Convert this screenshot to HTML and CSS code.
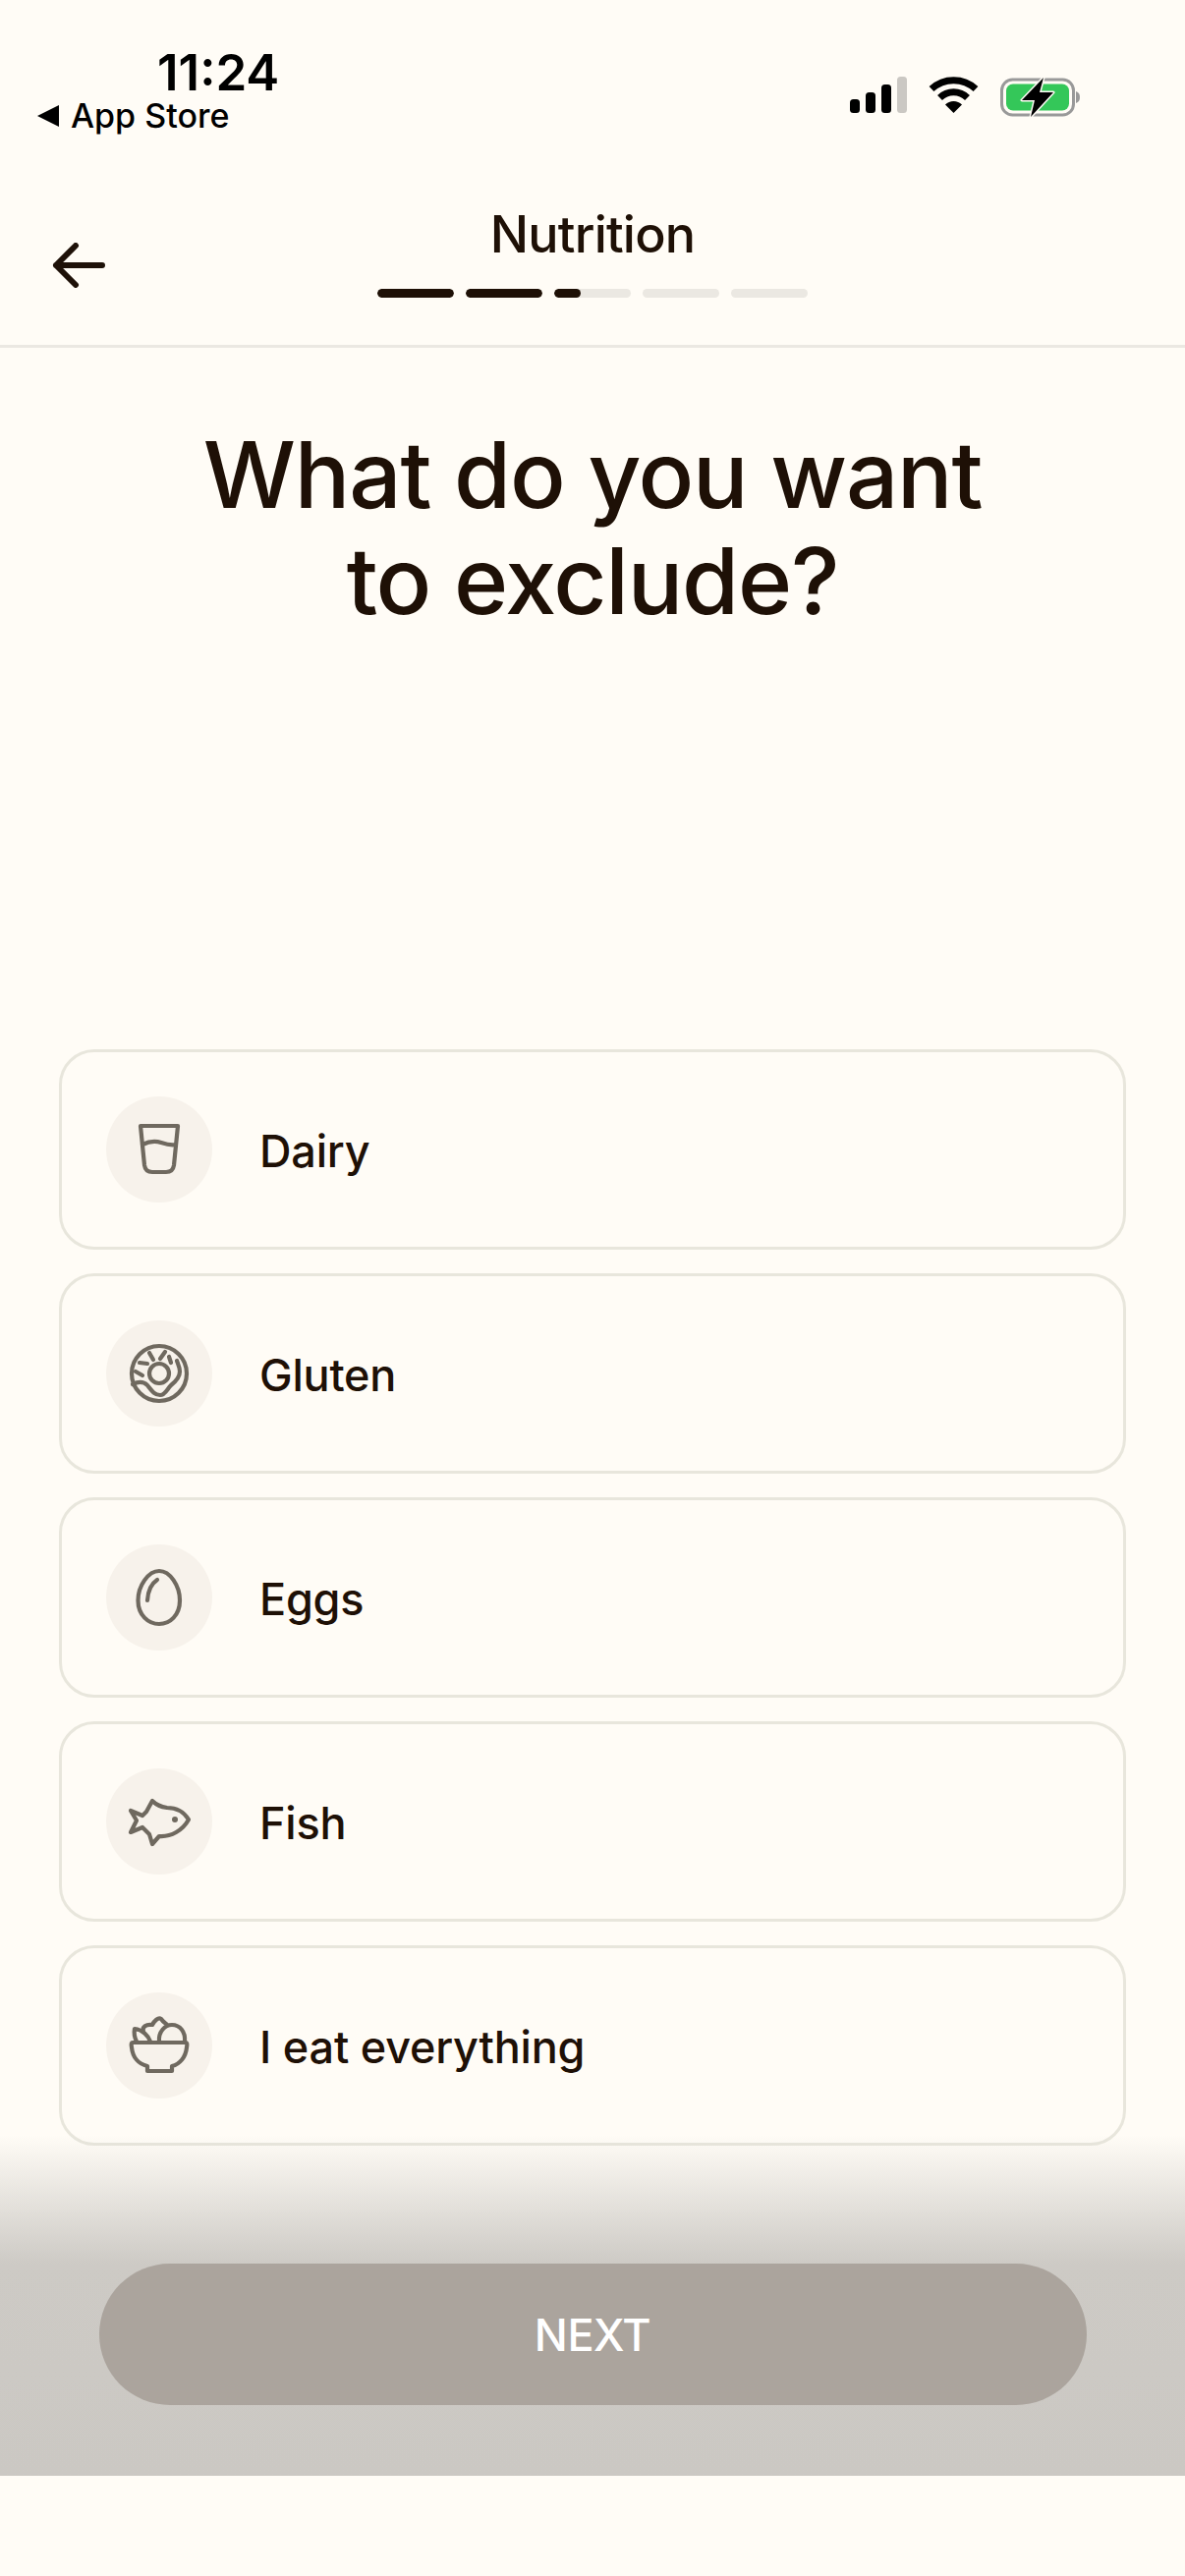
FILE: index.html
```html
<!DOCTYPE html>
<html lang="en">
<head>
  <meta charset="UTF-8">
  <title>Nutrition</title>
  <link rel="stylesheet" href="styles.css">
</head>
<body>
  <div class="status-bar">
    <div class="status-left">
      <div class="time">11:24</div>
      <div class="back-app"><span class="back-tri"></span>App Store</div>
    </div>
    <div class="status-right">
      <svg class="signal" width="58" height="37" viewBox="0 0 58 37">
        <rect x="0" y="23" width="10" height="14" rx="3.5" fill="#000"/>
        <rect x="16" y="16" width="10" height="21" rx="3.5" fill="#000"/>
        <rect x="32" y="8" width="10" height="29" rx="3.5" fill="#000"/>
        <rect x="48" y="0" width="10" height="37" rx="3.5" fill="#cbc8c3"/>
      </svg>
      <svg class="wifi" width="51" height="37" viewBox="0 0 51 37">
        <path d="M3 12.500A33 33 0 0 1 48 12.500" fill="none" stroke="#000" stroke-width="7"/>
        <path d="M11.500 21.500A20 20 0 0 1 39.500 21.500" fill="none" stroke="#000" stroke-width="7"/>
        <path d="M25.500 37L17 28.500A12 12 0 0 1 34 28.500Z" fill="#000"/>
      </svg>
      <svg class="battery" width="82" height="42" viewBox="0 0 82 42">
        <rect x="1.500" y="3" width="73" height="36" rx="11" fill="none" stroke="#999" stroke-width="3"/>
        <rect x="6" y="7.500" width="64" height="27" rx="7" fill="#34c759"/>
        <path d="M77 15C80 16 81 18 81 21C81 24 80 26 77 27Z" fill="#999"/>
        <path d="M44 1L22 24H35L31 41L54 16H40Z" fill="#000" stroke="#fffcf6" stroke-width="3" paint-order="stroke" stroke-linejoin="round"/>
      </svg>
    </div>
  </div>

  <header class="top-nav">
    <svg class="back-arrow" width="56" height="46" viewBox="0 0 56 46">
      <path d="M52 23H5M25 3L5 23L25 43" fill="none" stroke="#1e1108" stroke-width="6" stroke-linecap="round" stroke-linejoin="round"/>
    </svg>
    <div class="nav-center">
      <div class="nav-title">Nutrition</div>
      <div class="progress">
        <div class="seg"><div class="seg-fill seg-full"></div></div>
        <div class="seg"><div class="seg-fill seg-full"></div></div>
        <div class="seg"><div class="seg-fill seg-third"></div></div>
        <div class="seg"></div>
        <div class="seg"></div>
      </div>
    </div>
  </header>

  <h1 class="question">What do you want<br>to exclude?</h1>

  <div class="options">
    <div class="option">
      <div class="option-icon">
        <svg viewBox="0 0 108 108" width="108" height="108">
          <path d="M35 30H73L69 70Q68 77 61 77H47Q40 77 39 70Z"/>
          <path d="M37 49C45 45 50 45 56 47C62 49 66 50 71 49"/>
        </svg>
      </div>
      <span class="option-label">Dairy</span>
    </div>
    <div class="option">
      <div class="option-icon">
        <svg viewBox="0 0 108 108" width="108" height="108">
          <circle cx="54" cy="54" r="28"/>
          <circle cx="54" cy="54" r="10"/>
          <path d="M34 43L42 44M44 33L48 40M60 32L55 39M64 37L66 43M30 52L37 56"/>
          <path d="M27 65C33 62 38 62 42 66C46 71 49 76 55 76C60 76 62 70 66 66C71 62 75 58 75 52C75 48 73 44 72 41"/>
        </svg>
      </div>
      <span class="option-label">Gluten</span>
    </div>
    <div class="option">
      <div class="option-icon">
        <svg viewBox="0 0 108 108" width="108" height="108">
          <path d="M54 27C65 27 75 42 75 57C75 72 65 81 54 81C43 81 32.500 72 32.500 57C32.500 42 43 27 54 27Z"/>
          <path d="M52 36C46 40 42.500 48 42 57"/>
        </svg>
      </div>
      <span class="option-label">Eggs</span>
    </div>
    <div class="option">
      <div class="option-icon">
        <svg viewBox="0 0 108 108" width="108" height="108">
          <path d="M84 52C79 44 72 40 62 40C56 39 52 38 47 33L41 44L37 48L25 43L31 53L25 65L37 60L44 67L47 77L54 69C66 70 78 63 84 52Z"/>
          <circle class="dot" cx="70" cy="52" r="3"/>
        </svg>
      </div>
      <span class="option-label">Fish</span>
    </div>
    <div class="option">
      <div class="option-icon">
        <svg viewBox="0 0 108 108" width="108" height="108">
          <path d="M27 51H81Q83 51 82 56C81 66 75 73 67 75V80H42V75C33 73 27 66 26 56Q25 51 27 51Z"/>
          <path d="M54 50C53 40 60 33 67 33C75 33 81 40 80 50"/>
          <path d="M45 50C43 44 37 38 29 37C28 42 29 46 31 50"/>
          <path d="M38 40C36 35 41 32 47 33C49 29 53 25 56 27C58 30 60 31 62 33"/>
        </svg>
      </div>
      <span class="option-label">I eat everything</span>
    </div>
  </div>

  <div class="footer">
    <button class="next-btn" type="button">NEXT</button>
  </div>
</body>
</html>
```

FILE: styles.css
```css
html, body {
  margin: 0;
  padding: 0;
}

body {
  position: relative;
  height: 2622px;
  overflow: hidden;
  font-family: Inter, "Liberation Sans", Arial, sans-serif;
  background-color: #fffcf6;
  color: #1e1006;
}

.status-bar {
  display: flex;
  justify-content: space-between;
  height: 170px;
  padding: 48px 106px 0 38px;
  box-sizing: border-box;
}

.time {
  margin-left: 122px;
  font-size: 51px;
  font-weight: 600;
  line-height: 52px;
  color: #000;
}

.back-app {
  display: flex;
  align-items: center;
  gap: 12px;
  margin-top: -2px;
  font-size: 34px;
  font-weight: 500;
  line-height: 40px;
  color: #000;
}

.back-tri {
  width: 0;
  height: 0;
  border-top: 11px solid transparent;
  border-bottom: 11px solid transparent;
  border-right: 22px solid #000;
}

.status-right {
  display: flex;
  align-items: flex-start;
  gap: 22px;
  padding-top: 30px;
}

.top-nav {
  position: relative;
  height: 184px;
  box-sizing: border-box;
  border-bottom: 3px solid #ebe8e2;
}

.back-arrow {
  position: absolute;
  left: 52px;
  top: 77px;
}

.nav-center {
  display: flex;
  flex-direction: column;
  align-items: center;
  padding-top: 39px;
}

.nav-title {
  font-size: 52px;
  font-weight: 450;
  line-height: 60px;
  letter-spacing: -0.8px;
}

.progress {
  display: flex;
  gap: 12px;
  margin-top: 25px;
}

.seg {
  width: 78px;
  height: 9px;
  border-radius: 5px;
  background-color: #ebe8e2;
  overflow: hidden;
}

.seg-fill {
  height: 100%;
  border-radius: 5px;
  background-color: #1e1006;
}

.seg-full {
  width: 100%;
}

.seg-third {
  width: 34%;
}

.question {
  margin: 75px 0 0;
  font-size: 94px;
  font-weight: 450;
  line-height: 108px;
  letter-spacing: -1.2px;
  text-align: center;
}

.options {
  display: flex;
  flex-direction: column;
  gap: 24px;
  margin: 423px 60px 0;
}

.option {
  display: flex;
  align-items: center;
  gap: 48px;
  height: 204px;
  padding-left: 45px;
  box-sizing: border-box;
  border: 3px solid #e8e6dc;
  border-radius: 36px;
}

.option-icon {
  width: 108px;
  height: 108px;
  border-radius: 50%;
  background-color: #f7f2eb;
}

.option-icon svg {
  display: block;
  fill: none;
  stroke: #6f695f;
  stroke-width: 4.2;
  stroke-linecap: round;
  stroke-linejoin: round;
}

.option-icon .dot {
  fill: #6f695f;
  stroke: none;
}

.option-label {
  padding-top: 2px;
  font-size: 45px;
  font-weight: 450;
  letter-spacing: -0.2px;
}

.footer {
  position: absolute;
  left: 0;
  right: 0;
  bottom: 102px;
  height: 347px;
  display: flex;
  justify-content: center;
  align-items: flex-end;
  padding-bottom: 72px;
  box-sizing: border-box;
  background: linear-gradient(to bottom, rgba(203, 200, 195, 0) 0%, #cdcac5 38%, #cbc8c3 100%);
}

.next-btn {
  width: 1005px;
  height: 144px;
  border: 0;
  border-radius: 72px;
  background-color: #aba49d;
  color: #fff;
  font-family: inherit;
  font-size: 45px;
  font-weight: 500;
  letter-spacing: -0.5px;
}
```
